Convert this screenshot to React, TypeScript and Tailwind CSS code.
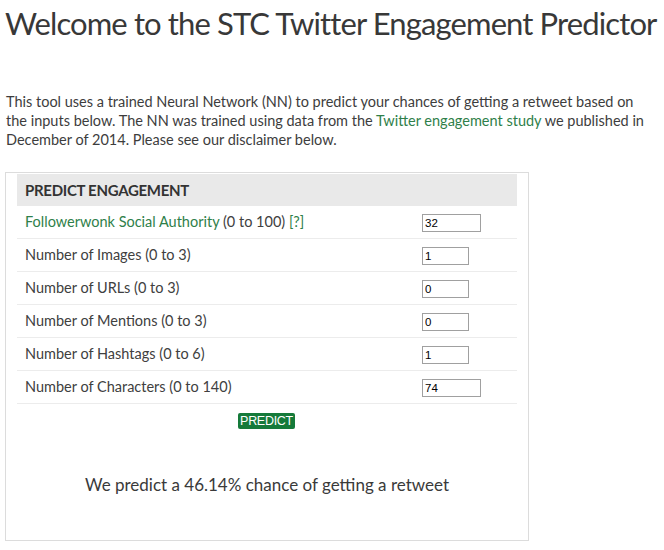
import { useState } from 'react';

type Field = {
  key: string;
  label: string;
  range: string;
  value: string;
  wide?: boolean;
  link?: boolean;
};

const fields: Field[] = [
  { key: 'authority', label: 'Followerwonk Social Authority', range: '(0 to 100)', value: '32', wide: true, link: true },
  { key: 'images', label: 'Number of Images', range: '(0 to 3)', value: '1' },
  { key: 'urls', label: 'Number of URLs', range: '(0 to 3)', value: '0' },
  { key: 'mentions', label: 'Number of Mentions', range: '(0 to 3)', value: '0' },
  { key: 'hashtags', label: 'Number of Hashtags', range: '(0 to 6)', value: '1' },
  { key: 'chars', label: 'Number of Characters', range: '(0 to 140)', value: '74', wide: true },
];

const App = () => {
  const [values, setValues] = useState<Record<string, string>>(
    Object.fromEntries(fields.map((f) => [f.key, f.value]))
  );

  return (
    <div className="min-h-[550px] bg-white text-[#404040]" style={{ fontFamily: 'Lato, "Open Sans", sans-serif' }}>
      <h1 className="pl-[5px] pt-[3px] text-[31px] leading-[40px] font-normal text-[#383838] tracking-[-0.88px] whitespace-nowrap">
        Welcome to the STC Twitter Engagement Predictor
      </h1>

      <p className="mt-[49px] pl-[6px] w-[650px] text-[14.5px] leading-[19px] text-[#3d3d3d]">
        This tool uses a trained Neural Network (NN) to predict your chances of getting a retweet based on the inputs
        below. The NN was trained using data from the{' '}
        <a className="text-[#2f7f4a]">Twitter engagement study</a> we published in December of 2014. Please see our
        disclaimer below.
      </p>

      {/* Predict card */}
      <div className="ml-[5px] mt-[23px] w-[524px] h-[369px] border border-[#dcdcdc] px-[11px] pt-[1px]">
        <div className="h-[32px] bg-[#e9e9e9] flex items-center pl-[8px] text-[15px] font-bold text-[#333] tracking-[-0.3px]">
          PREDICT ENGAGEMENT
        </div>

        {fields.map((f) => (
          <div key={f.key} className="h-[33px] flex items-center border-b border-[#ececec] pl-[8px] text-[14.5px]">
            <div className="flex-1">
              {f.link ? (
                <>
                  <a className="text-[#2f7f4a]">{f.label}</a> {f.range} <a className="text-[#2f7f4a]">[?]</a>
                </>
              ) : (
                <>
                  {f.label} {f.range}
                </>
              )}
            </div>
            <div className="w-[95px]">
              <input
                value={values[f.key]}
                onChange={(e) => setValues({ ...values, [f.key]: e.target.value })}
                className={`${f.wide ? 'w-[59px]' : 'w-[47px]'} h-[18px] border border-[#a0a0a0] px-[2px] text-[11.5px] text-black outline-none`}
                style={{ fontFamily: 'Arial, "Liberation Sans", sans-serif' }}
              />
            </div>
          </div>
        ))}

        <div className="flex justify-center pt-[9px] pr-[1px]">
          <button
            className="h-[16px] px-[2px] rounded-[2px] bg-[#157a3a] text-white text-[12.5px] leading-[16px] tracking-[-0.3px]"
            style={{ fontFamily: 'Arial, "Liberation Sans", sans-serif' }}
          >
            PREDICT
          </button>
        </div>

        <p className="mt-[43px] text-center text-[17px] text-[#3a3a3a]">
          We predict a 46.14% chance of getting a retweet
        </p>
      </div>
    </div>
  );
};

export default App;
